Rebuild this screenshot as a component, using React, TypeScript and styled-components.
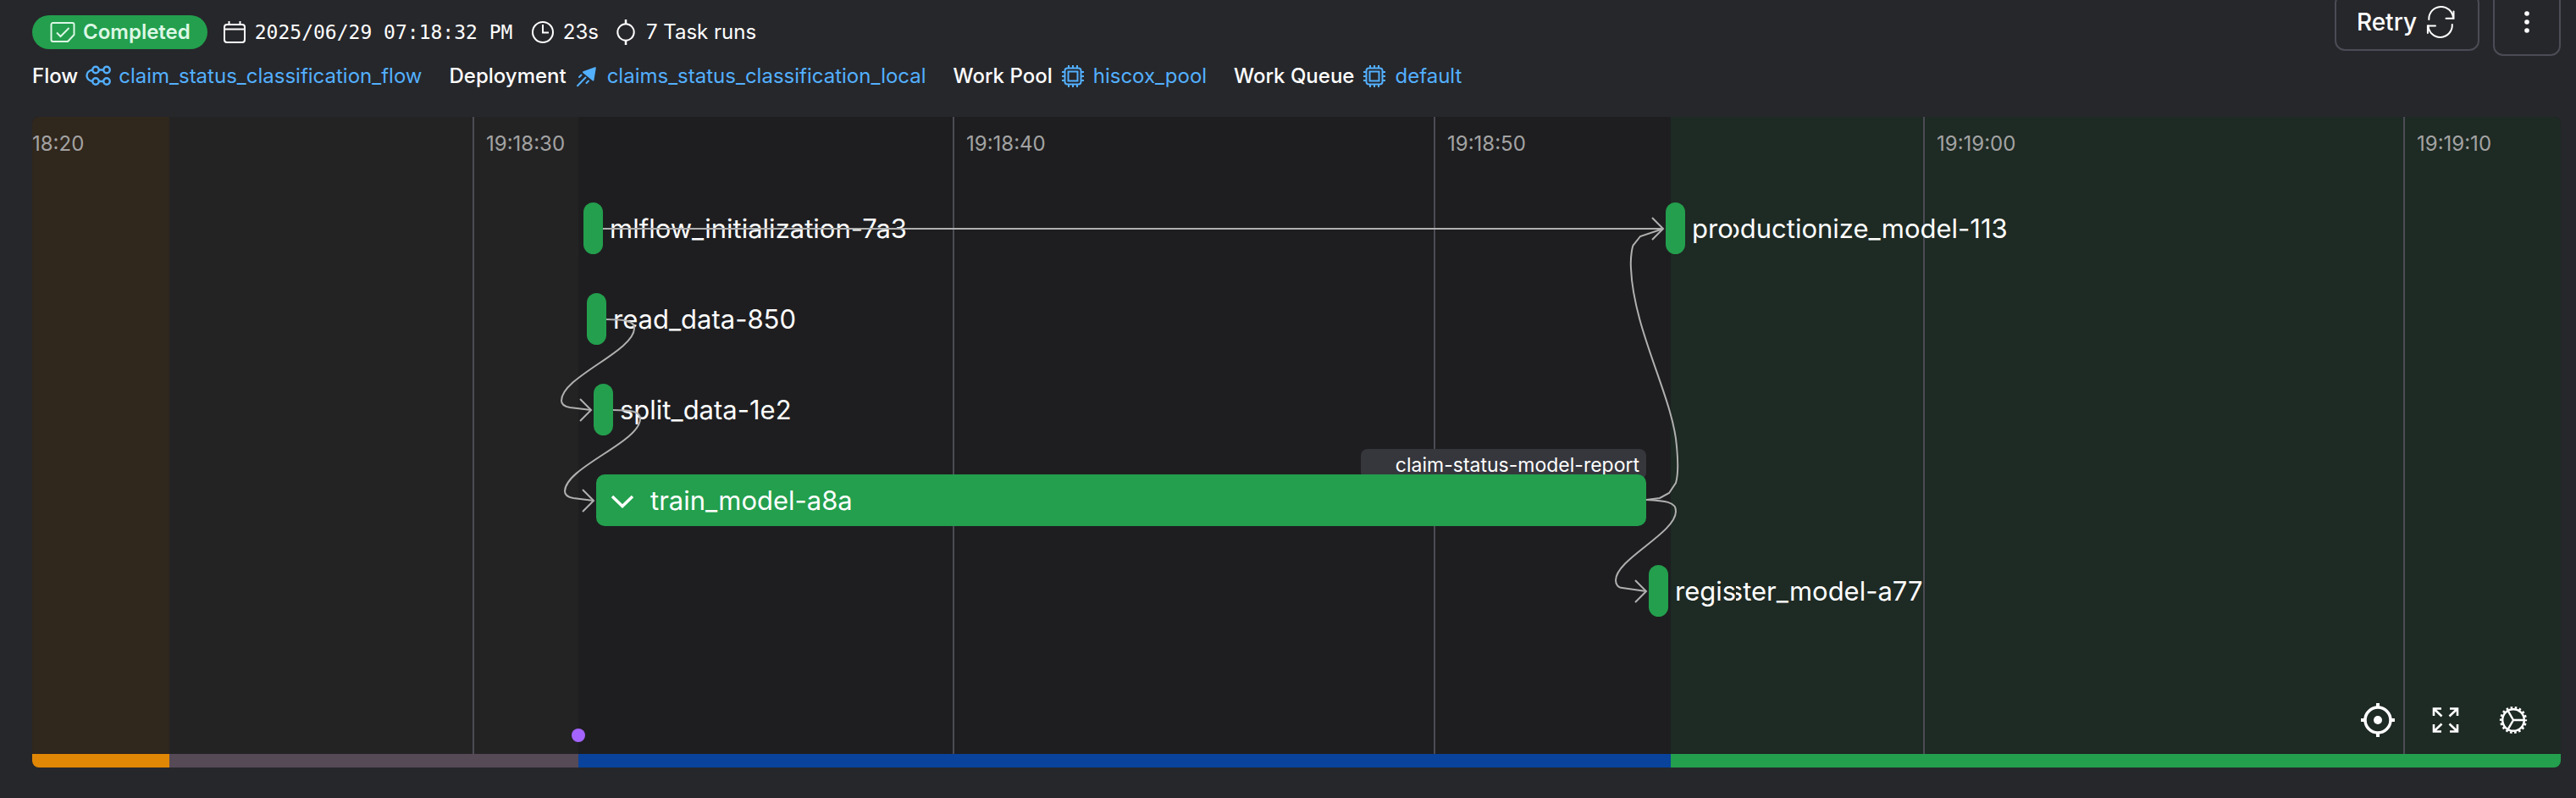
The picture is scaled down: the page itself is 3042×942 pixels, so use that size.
import React from "react";
import styled, { createGlobalStyle } from "styled-components";

const GlobalStyle = createGlobalStyle`
  * { box-sizing: border-box; }
  html { background: #26272b; }
  body {
    margin: 0;
    background: #26272b;
    color: #ffffff;
    font-family: Inter, "Liberation Sans", sans-serif;
    font-size: 24px;
    line-height: 32px;
    overflow-x: hidden;
  }
`;

const Page = styled.main`
  padding: 0 18px 36px 38px;
`;

const Header = styled.header`
  display: flex;
  justify-content: space-between;
  align-items: flex-start;
  margin-bottom: 32px;
`;

const Summary = styled.div`
  display: flex;
  flex-direction: column;
  gap: 16px;
  padding-top: 18px;
`;

const MetaRow = styled.div<{ $gap: number }>`
  display: flex;
  align-items: center;
  gap: ${(p) => p.$gap}px;
  white-space: nowrap;
`;

const MetaItem = styled.div`
  display: flex;
  align-items: center;
  gap: 8px;
`;

const StateBadge = styled.span`
  display: inline-flex;
  align-items: center;
  gap: 8px;
  height: 40px;
  padding: 0 20px;
  border-radius: 20px;
  background: #239f4d;
  color: #dcf7e5;
  font-weight: 600;
`;

const StartTime = styled.time`
  width: 308px;
  font-family: "DejaVu Sans Mono", "Liberation Mono", monospace;
  font-size: 23px;
`;

const MetaLabel = styled.span`
  font-weight: 500;
`;

const MetaLink = styled.a`
  display: flex;
  align-items: center;
  gap: 8px;
  color: #53b0ff;
  text-decoration: none;
`;

const Icon = styled.svg<{ $size: number }>`
  display: block;
  flex: none;
  width: ${(p) => p.$size}px;
  height: ${(p) => p.$size}px;
  fill: none;
  stroke: currentColor;
  stroke-width: 2;
`;

const Actions = styled.div`
  display: flex;
  align-items: center;
  gap: 16px;
  margin-top: -14px;
`;

const ActionButton = styled.button`
  display: flex;
  align-items: center;
  justify-content: center;
  gap: 8px;
  border: 2px solid #4b4c55;
  border-radius: 12px;
  background: transparent;
  color: #ffffff;
  font: 500 28px/40px Inter, "Liberation Sans", sans-serif;
`;

const RetryButton = styled(ActionButton)`
  height: 68px;
  padding: 0 24px;
`;

const MenuButton = styled(ActionButton)`
  width: 80px;
  height: 80px;
  padding: 0;
`;

const Graph = styled.section`
  position: relative;
  display: grid;
  height: 768px;
  border-radius: 8px;
  overflow: hidden;
  background: #1e1e20;
`;

const Layer = styled.div`
  grid-area: 1 / 1;
  display: flex;
  min-width: 0;
`;

const Band = styled.div<{ $width?: number; $tint: string; $bar: string }>`
  flex: ${(p) => (p.$width ? `0 0 ${p.$width}px` : "1 1 0")};
  background: ${(p) => p.$tint};
  border-bottom: 16px solid ${(p) => p.$bar};
`;

const Tick = styled.div<{ $width?: number; $first?: boolean }>`
  flex: ${(p) => (p.$width ? `0 0 ${p.$width}px` : "1 1 0")};
  margin-bottom: 16px;
  padding: 16px 0 0 ${(p) => (p.$first ? 0 : 14)}px;
  border-left: ${(p) => (p.$first ? "0" : "2px solid #4b4c55")};
  color: #a3a3a3;
  white-space: nowrap;
`;

const Canvas = styled.div`
  position: absolute;
  inset: 0;
`;

const Edges = styled.svg`
  position: absolute;
  left: 0;
  top: 0;
  width: 2986px;
  height: 768px;
  fill: none;
  stroke: #b0b0b0;
  stroke-width: 2;
`;

const TaskNode = styled.div<{ $x: number; $y: number }>`
  position: absolute;
  left: ${(p) => p.$x}px;
  top: ${(p) => p.$y}px;
  display: flex;
  align-items: center;
  gap: 8px;
  font-size: 31px;
  line-height: 61px;
  white-space: nowrap;
`;

const TaskPill = styled.span`
  width: 23px;
  height: 61px;
  border-radius: 12px;
  background: #239f4d;
`;

const TaskName = styled.span`
  display: flex;
`;

/* Right-hand sliver of the letter that is drawn twice at a texture seam. */
const Seam = styled.span`
  display: flex;
  justify-content: flex-end;
  width: 8px;
  overflow: hidden;
`;

const SubflowNode = styled.button<{ $x: number; $y: number; $width: number }>`
  position: absolute;
  left: ${(p) => p.$x}px;
  top: ${(p) => p.$y}px;
  display: flex;
  align-items: center;
  gap: 18px;
  width: ${(p) => p.$width}px;
  height: 61px;
  padding: 0 14px;
  border: 0;
  border-radius: 10px;
  background: #239f4d;
  color: #ffffff;
  font: 400 31px/61px Inter, "Liberation Sans", sans-serif;
`;

const Artifact = styled.div`
  position: absolute;
  left: 1569px;
  top: 392px;
  width: 337px;
  height: 36px;
  padding-right: 8px;
  border-radius: 8px;
  background: #36373d;
  font-size: 23px;
  line-height: 38px;
  text-align: right;
  white-space: nowrap;
`;

const EventDot = styled.span`
  position: absolute;
  left: 637px;
  top: 722px;
  width: 16px;
  height: 16px;
  border-radius: 50%;
  background: #a564ff;
`;

const Controls = styled.div`
  position: absolute;
  right: 24px;
  bottom: 24px;
  display: flex;
  gap: 16px;
`;

const ControlButton = styled.button`
  display: grid;
  place-items: center;
  width: 64px;
  height: 64px;
  padding: 0;
  border: 0;
  background: transparent;
  color: #ffffff;
`;

const CompletedIcon = () => (
  <Icon $size={32} viewBox="0 0 32 32" aria-hidden="true">
    <path d="M4.5 5H27.5a2 2 0 0 1 2 2V19L22 27H4.5a2 2 0 0 1-2-2V7a2 2 0 0 1 2-2z" strokeLinejoin="round" />
    <path d="M9 16.5l4.5 4.5L23.5 11" />
  </Icon>
);

const CalendarIcon = () => (
  <Icon $size={32} viewBox="0 0 32 32" aria-hidden="true">
    <rect x="4" y="7" width="24" height="21" rx="3" />
    <path d="M4 12.5H28M9.500 3V7M22.500 3V7" />
  </Icon>
);

const ClockIcon = () => (
  <Icon $size={32} viewBox="0 0 32 32" aria-hidden="true">
    <circle cx="16" cy="16" r="12" />
    <path d="M16 7V16.500H23" />
  </Icon>
);

const TaskIcon = () => (
  <Icon $size={32} viewBox="0 0 32 32" aria-hidden="true">
    <circle cx="16" cy="16" r="9.700" />
    <path d="M16 1V6M16 26V31" strokeWidth="2.500" />
  </Icon>
);

const FlowIcon = () => (
  <Icon $size={32} viewBox="0 0 32 32" aria-hidden="true">
    <g strokeWidth="2.400">
      <circle cx="13" cy="8.500" r="3.700" />
      <circle cx="26" cy="8.500" r="3.700" />
      <circle cx="13" cy="22" r="3.700" />
      <circle cx="26" cy="22" r="3.700" />
      <path d="M16.500 8.500H22.500M16.500 22H22.500M9.500 8.500C5 9 2.500 12 2.500 15.200S5 21.500 9.500 22" />
    </g>
  </Icon>
);

const DeploymentIcon = () => (
  <Icon $size={32} viewBox="0 0 32 32" aria-hidden="true" strokeLinecap="round">
    <path d="M25.800 6.200L12 11.200L23.400 20.500z" fill="currentColor" strokeLinejoin="round" />
    <path d="M14.500 17.500L5 27.200M9.500 14.500L7 17M18 21.500L15.500 24" />
  </Icon>
);

const ChipIcon = () => (
  <Icon $size={32} viewBox="0 0 32 32" aria-hidden="true">
    <rect x="6.500" y="6.500" width="19" height="19" rx="3" />
    <rect x="10.500" y="10.500" width="11" height="11" />
    <path d="M11 3V6M16 3V6M21 3V6M11 26V29M16 26V29M21 26V29M3 11H6M3 16H6M3 21H6M26 11H29M26 16H29M26 21H29" />
  </Icon>
);

const RefreshIcon = () => (
  <Icon $size={40} viewBox="0 0 40 40" aria-hidden="true" strokeLinecap="round">
    <path d="M6.300 17A14 14 0 0 1 35 15.500M33.800 23A14 14 0 0 1 5.500 24.500" />
    <path d="M35.500 7.500V15.700H26.500M4.900 33V24.500H14" />
  </Icon>
);

const KebabIcon = () => (
  <Icon $size={40} viewBox="0 0 40 40" aria-hidden="true">
    <g fill="currentColor" stroke="none">
      <circle cx="20" cy="10" r="2.800" />
      <circle cx="20" cy="20" r="2.800" />
      <circle cx="20" cy="30" r="2.800" />
    </g>
  </Icon>
);

const ChevronIcon = () => (
  <Icon $size={32} viewBox="0 0 32 32" aria-hidden="true">
    <path d="M5 11L17 22.500L29 11" strokeWidth="3.500" />
  </Icon>
);

const CenterIcon = () => (
  <Icon $size={40} viewBox="0 0 40 40" aria-hidden="true">
    <circle cx="20" cy="20" r="15" strokeWidth="3.500" />
    <circle cx="20" cy="20" r="5" fill="currentColor" stroke="none" />
    <path d="M20 0V5M20 35V40M0 20H5M35 20H40" strokeWidth="4" />
  </Icon>
);

const ExpandIcon = () => (
  <Icon $size={40} viewBox="0 0 40 40" aria-hidden="true">
    <path
      d="M6 15V6.500H15M6 6.500L15.500 15.500M25 6.500H34V15M34 6.500L24.500 15.500M6 25V33.500H15M6 33.500L15.500 24.500M25 33.500H34V25M34 33.500L24.500 24.500"
      strokeWidth="2.600"
    />
  </Icon>
);

const GearIcon = () => (
  <Icon $size={40} viewBox="0 0 40 40" aria-hidden="true">
    <circle cx="20" cy="20" r="12.800" strokeWidth="2.500" />
    <circle cx="20" cy="20" r="14.800" strokeWidth="2.600" strokeDasharray="2.580 2.585" strokeDashoffset="1.290" />
    <path d="M20 20H32.500M20 20L13.700 9.100M20 20L13.700 30.900" strokeWidth="2.400" />
  </Icon>
);

const bands = [
  { tint: "#30271d", bar: "#e08706", width: 162 },
  { tint: "#232324", bar: "#564a56", width: 483 },
  { tint: "#1e1e20", bar: "#09439b", width: 1290 },
  { tint: "#1e2a24", bar: "#239f4d" },
];

const ticks = [
  { label: "18:20", width: 520 },
  { label: "19:18:30", width: 567 },
  { label: "19:18:40", width: 568 },
  { label: "19:18:50", width: 578 },
  { label: "19:19:00", width: 567 },
  { label: "19:19:10" },
];

const tasks = [
  { name: "mlflow_initialization-7a3", x: 651, y: 101 },
  { name: "read_data-850", x: 655, y: 208 },
  { name: "split_data-1e2", x: 663, y: 315 },
  { name: "productionize_model-113", seamAt: 3, x: 1929, y: 101 },
  { name: "register_model-a77", seamAt: 5, x: 1909, y: 529 },
];

const edges = [
  "M674 132H1926",
  "M678 239C697 239 712 240 711 250C710 277 625 307 625 335C625 340 629 342 635 343L660 346",
  "M686 346C705 346 719 347 718 357C717 384 629 414 629 442C629 447 633 449 639 450L663 453",
  "M1906 452L1922 450L1933 444L1941 432C1944 422 1944 410 1942 389C1938 332 1891 252 1888 179C1887 164 1890 152 1891 151L1899 141L1926 132",
  "M1906 452C1927 453 1942 454 1941 466C1940 492 1870 522 1870 547C1870 552 1873 556 1878 556L1906 560",
];

const arrowHeads = [
  [1926, 132],
  [660, 346],
  [663, 453],
  [1906, 560],
];

export default function App() {
  return (
    <>
      <GlobalStyle />
      <Page>
        <Header>
          <Summary>
            <MetaRow $gap={16}>
              <StateBadge>
                <CompletedIcon />
                Completed
              </StateBadge>
              <MetaItem>
                <CalendarIcon />
                <StartTime>2025/06/29 07:18:32 PM</StartTime>
              </MetaItem>
              <MetaItem>
                <ClockIcon />
                23s
              </MetaItem>
              <MetaItem>
                <TaskIcon />7 Task runs
              </MetaItem>
            </MetaRow>
            <MetaRow $gap={32}>
              <MetaItem>
                <MetaLabel>Flow</MetaLabel>
                <MetaLink href="#flow">
                  <FlowIcon />
                  claim_status_classification_flow
                </MetaLink>
              </MetaItem>
              <MetaItem>
                <MetaLabel>Deployment</MetaLabel>
                <MetaLink href="#deployment">
                  <DeploymentIcon />
                  claims_status_classification_local
                </MetaLink>
              </MetaItem>
              <MetaItem>
                <MetaLabel>Work Pool</MetaLabel>
                <MetaLink href="#work-pool">
                  <ChipIcon />
                  hiscox_pool
                </MetaLink>
              </MetaItem>
              <MetaItem>
                <MetaLabel>Work Queue</MetaLabel>
                <MetaLink href="#work-queue">
                  <ChipIcon />
                  default
                </MetaLink>
              </MetaItem>
            </MetaRow>
          </Summary>
          <Actions>
            <RetryButton type="button">
              Retry
              <RefreshIcon />
            </RetryButton>
            <MenuButton type="button" aria-label="More actions">
              <KebabIcon />
            </MenuButton>
          </Actions>
        </Header>

        <Graph aria-label="Flow run graph">
          <Layer>
            {bands.map((b) => (
              <Band key={b.bar} $tint={b.tint} $bar={b.bar} $width={b.width} />
            ))}
          </Layer>
          <Layer>
            {ticks.map((t, i) => (
              <Tick key={t.label} $width={t.width} $first={i === 0}>
                {t.label}
              </Tick>
            ))}
          </Layer>
          <Canvas>
            <Artifact>claim-status-model-report</Artifact>
            {tasks.map((t) => (
              <TaskNode key={t.name} $x={t.x} $y={t.y}>
                <TaskPill />
                {t.seamAt ? (
                  <TaskName>
                    {t.name.slice(0, t.seamAt)}
                    <Seam aria-hidden="true">
                      <span>{t.name[t.seamAt - 1]}</span>
                    </Seam>
                    {t.name.slice(t.seamAt)}
                  </TaskName>
                ) : (
                  t.name
                )}
              </TaskNode>
            ))}
            <SubflowNode type="button" $x={666} $y={422} $width={1240}>
              <ChevronIcon />
              train_model-a8a
            </SubflowNode>
            <Edges viewBox="0 0 2986 768" aria-hidden="true">
              {edges.map((d) => (
                <path key={d} d={d} />
              ))}
              {arrowHeads.map(([x, y]) => (
                <path key={`${x}-${y}`} d={`M${x - 13} ${y - 13}L${x} ${y}L${x - 13} ${y + 13}`} />
              ))}
            </Edges>
            <EventDot />
          </Canvas>
          <Controls>
            <ControlButton type="button" aria-label="Recenter">
              <CenterIcon />
            </ControlButton>
            <ControlButton type="button" aria-label="Fullscreen">
              <ExpandIcon />
            </ControlButton>
            <ControlButton type="button" aria-label="Graph settings">
              <GearIcon />
            </ControlButton>
          </Controls>
        </Graph>
      </Page>
    </>
  );
}
